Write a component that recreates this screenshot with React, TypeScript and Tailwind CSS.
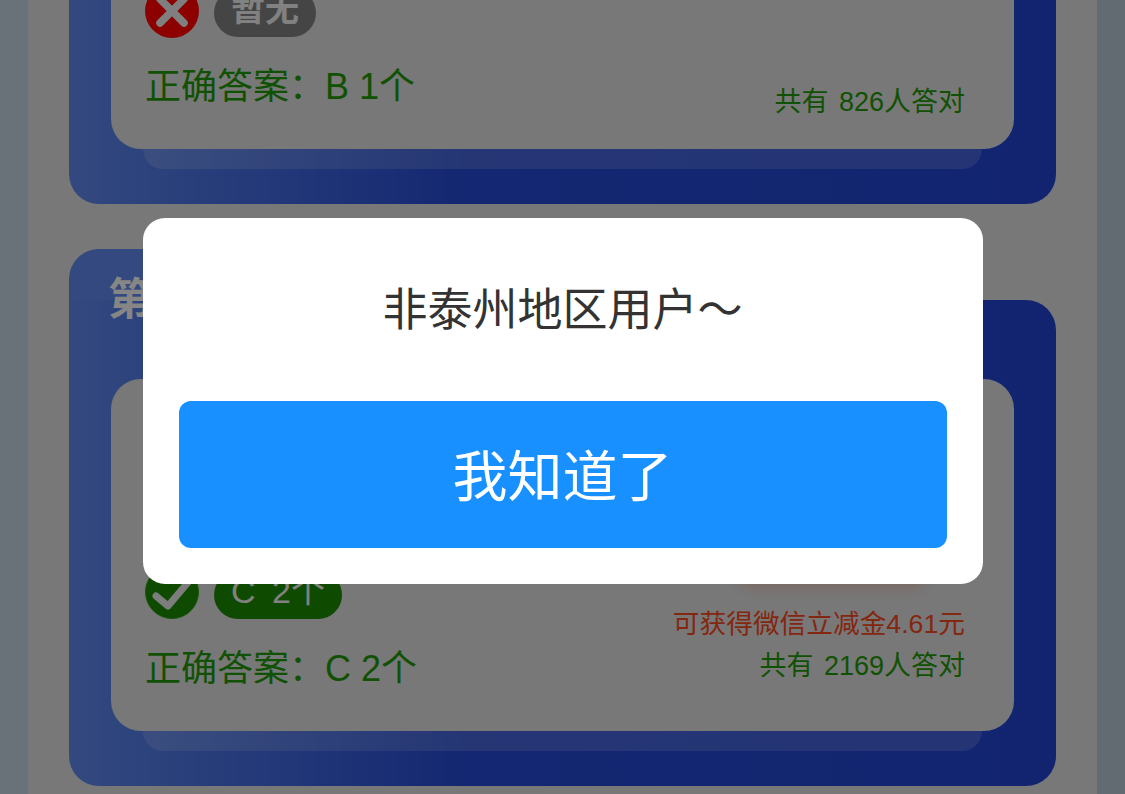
import { ReactNode } from "react";

const font = { fontFamily: '"Liberation Sans", "Noto Sans CJK SC", sans-serif' };

function CrossIcon() {
  return (
    <svg width="54" height="54" viewBox="0 0 54 54" className="shrink-0 -mb-[1px]">
      <circle cx="27" cy="27" r="27" fill="#ff0000" />
      <path d="M15 15 L39 39 M39 15 L15 39" stroke="#e8e8e8" strokeWidth="7.5" strokeLinecap="round" />
    </svg>
  );
}

function CheckIcon() {
  return (
    <svg width="54" height="54" viewBox="0 0 54 54" className="shrink-0">
      <circle cx="27" cy="27" r="26.5" fill="#1a8700" stroke="#2c9a14" strokeWidth="1" />
      <path d="M11 31 L23 41 L45 15" fill="none" stroke="#e4e4e4" strokeWidth="7" strokeLinecap="round" strokeLinejoin="round" />
    </svg>
  );
}

function QuestionCard({
  icon,
  badge,
  badgeClass,
  answer,
  total,
  bonus,
}: {
  icon: ReactNode;
  badge: string;
  badgeClass: string;
  answer: string;
  total: string;
  bonus?: string;
}) {
  return (
    <section className="shrink-0 text-[#1f9406]">
      {/* title tab */}
      <div className="w-[500px] h-[51px] rounded-t-[30px] bg-[#5e85e7] pl-[39px] pt-[29px]">
        <span className="block text-[44px] leading-[44px] font-bold text-[#f4f4f4]">第二题</span>
      </div>
      <div className="rounded-tr-[30px] rounded-b-[30px] bg-gradient-to-r from-[#5e85e7] via-[#2548cf] via-40% to-[#2143cc] px-[42px] pt-[79px] pb-[35px]">
        <div className="relative z-10 h-[352px] rounded-[30px] bg-[#dadada] pl-[34px] pr-[49px] pb-[38px] flex items-end justify-between">
          <div>
            <div className="flex items-end gap-[15px]">
              {icon}
              <span className={`h-[48px] rounded-full px-[17px] text-[34px] leading-[40px] text-[#ececec] ${badgeClass}`}>
                {badge}
              </span>
            </div>
            <p className="mt-[26px] text-[36px] leading-[48px]">{answer}</p>
          </div>
          <div className={`flex flex-col items-end leading-[42px] text-[27px] ${bonus ? "pb-[6px]" : "translate-y-[12px]"}`}>
            {bonus && (
              <>
                <div className="w-[205px] h-[55px] mr-[30px] mb-[22px] rounded-full bg-[#ff7a4d] shadow-[0_8px_12px_rgba(255,90,50,0.2)]" />
                <p className="text-[26.7px] text-[#f04820]">{bonus}</p>
              </>
            )}
            <p className="[word-spacing:3px]">{total}</p>
          </div>
        </div>
        <div className="h-[20px] mx-[32px] rounded-b-[30px] bg-white/15" />
      </div>
    </section>
  );
}

export default function App() {
  return (
    <div style={font} className="relative h-[794px] overflow-hidden flex bg-[#dadada]">
      <div className="w-[28px] shrink-0 bg-[#c0d0dc]" />
      <main className="flex-1 px-[41px] pb-[8px] flex flex-col justify-end gap-[45px]">
        <QuestionCard
          icon={<CrossIcon />}
          badge="暂无"
          badgeClass="font-bold bg-[#7e7e7e]"
          answer="正确答案：B 1个"
          total="共有 826人答对"
        />
        <QuestionCard
          icon={<CheckIcon />}
          badge="C 2个"
          badgeClass="[word-spacing:7px] bg-[#1a8700]"
          answer="正确答案：C 2个"
          total="共有 2169人答对"
          bonus="可获得微信立减金4.61元"
        />
      </main>
      <div className="w-[28px] shrink-0 bg-[#b4c3d0]" />

      {/* dialog */}
      <div className="absolute inset-0 z-20 bg-black/45 flex items-start justify-center pt-[218px]">
        <div className="w-[840px] h-[366px] rounded-[22px] bg-white px-[36px] pt-[63px] flex flex-col items-center">
          <p className="text-[45px] leading-[60px] text-[#333333]">非泰州地区用户～</p>
          <button className="mt-[60px] w-full h-[147px] rounded-[12px] bg-[#1890ff] pt-[6px] text-white text-[55px]">
            我知道了
          </button>
        </div>
      </div>
    </div>
  );
}
